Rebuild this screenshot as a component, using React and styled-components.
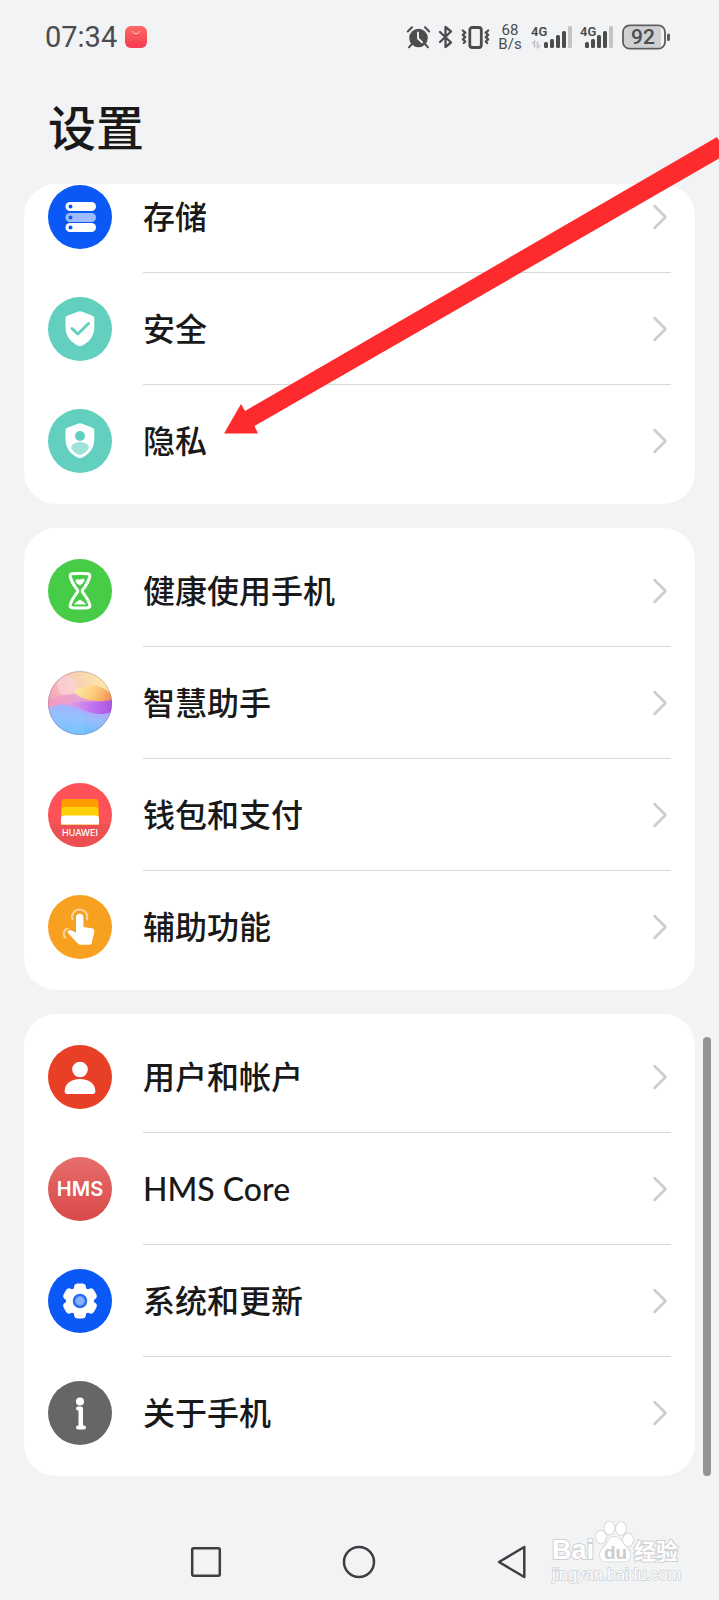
import styled, { createGlobalStyle } from 'styled-components';

const GlobalStyle = createGlobalStyle`
  * {
    box-sizing: border-box;
    margin: 0;
    padding: 0;
  }

  body {
    background: #f1f3f5;
    color: #191919;
    font-family: Lato, 'Noto Sans CJK SC', sans-serif;
  }
`;

const Screen = styled.div`
  position: relative;
  display: flex;
  flex-direction: column;
  min-height: 100vh;
  overflow: hidden;
`;

/* Status bar */

const StatusBar = styled.div`
  display: flex;
  align-items: center;
  justify-content: space-between;
  height: 74px;
  padding: 0 49px 0 45px;
  color: #4b4c4e;
  font-family: Roboto, sans-serif;
`;

const StatusGroup = styled.div`
  display: flex;
  align-items: center;
  gap: 8px;
`;

const Clock = styled.time`
  font-size: 29px;
  line-height: 32px;
`;

const NetSpeed = styled.div`
  display: flex;
  flex-direction: column;
  align-items: center;
  width: 24px;
  font-size: 15px;
  line-height: 14px;
`;

/* Settings list */

const Header = styled.header`
  padding: 22px 48px 24px;
`;

const Title = styled.h1`
  font-size: 48px;
  font-weight: 500;
  line-height: 64px;
`;

const Main = styled.main`
  position: relative;
  display: flex;
  flex-direction: column;
  gap: 24px;
  padding: 0 24px;
`;

const Card = styled.ul`
  padding: ${({ $scrolled }) => ($scrolled ? '0 24px 7px' : '7px 24px')};
  background: #fff;
  border-radius: 32px;
  list-style: none;
  overflow: hidden;
`;

const Item = styled.li`
  &:not(:last-child) a > div {
    border-bottom: 1px solid #d9d9d9;
  }
`;

const RowLink = styled.a`
  display: flex;
  align-items: center;
  gap: 31px;
  height: 112px;
  color: inherit;
  text-decoration: none;

  ${Card} > ${Item}:first-child > & {
    margin-top: ${({ $scrolled }) => ($scrolled ? '-23px' : '0')};
  }
`;

const RowBody = styled.div`
  flex: 1;
  display: flex;
  align-items: center;
  justify-content: space-between;
  height: 100%;
  padding-right: 3px;
`;

const Label = styled.span`
  font-size: 32px;
  font-weight: 500;
  line-height: 48px;
`;

const ScrollThumb = styled.div`
  position: absolute;
  right: 8px;
  bottom: 0;
  width: 8px;
  height: 34%;
  background: #929395;
  border-radius: 4px;
`;

/* Bottom navigation */

const NavBar = styled.nav`
  display: grid;
  grid-template-columns: repeat(3, 1fr);
  height: 76px;
  margin-top: auto;
  padding: 0 18%;
`;

const NavButton = styled.button`
  display: flex;
  align-items: center;
  justify-content: center;
  background: none;
  border: none;
`;

/* Overlays */

const Arrow = styled.svg`
  position: absolute;
  top: 134px;
  left: 224px;
  pointer-events: none;
`;

const Watermark = styled.div`
  position: absolute;
  right: 36px;
  bottom: 12px;
`;

const DARK = '#4b4c4e';

function AppBadge() {
  return (
    <svg width="22" height="22" viewBox="0 0 22 22">
      <defs>
        <linearGradient id="badge" x1="0" y1="0" x2="0" y2="1">
          <stop offset="0" stopColor="#fb6a62" />
          <stop offset="1" stopColor="#f53b50" />
        </linearGradient>
      </defs>
      <rect width="22" height="22" rx="6" fill="url(#badge)" />
      <path
        d="M7.500 5.500c1 3 6 3 7 0"
        fill="none"
        stroke="#ffd0cc"
        strokeWidth="1"
        strokeLinecap="round"
      />
    </svg>
  );
}

function AlarmIcon() {
  return (
    <svg width="24" height="24" viewBox="0 0 24 24">
      <circle cx="12.500" cy="13" r="9.300" fill={DARK} />
      <path
        d="M1.800 6.500 6 2.200M23.200 6.500 19 2.200M5.500 19.500 3 22.300M19.500 19.500 22 22.300"
        stroke={DARK}
        strokeWidth="2"
        strokeLinecap="round"
      />
      <path
        d="M12 7.500v6l4 3.800"
        fill="none"
        stroke="#f1f3f5"
        strokeWidth="1.900"
        strokeLinecap="round"
        strokeLinejoin="round"
      />
    </svg>
  );
}

function BluetoothIcon() {
  return (
    <svg width="15" height="24" viewBox="0 0 15 24">
      <path
        d="M2 7l11 10.500L7.500 22V2L13 6.500 2 17"
        fill="none"
        stroke={DARK}
        strokeWidth="2.300"
        strokeLinecap="round"
        strokeLinejoin="round"
      />
    </svg>
  );
}

function VibrateIcon() {
  return (
    <svg width="29" height="24" viewBox="0 0 29 24">
      <g
        fill="none"
        stroke={DARK}
        strokeLinecap="round"
        strokeLinejoin="round"
      >
        <rect x="8.800" y="2.500" width="11.500" height="20" rx="2.500" strokeWidth="2.800" />
        <path
          d="M1.800 5.500l2.500 2.200-2.500 2.200 2.500 2.200-2.500 2.200 2.500 2.200-1.500 1.500M27.200 5.500l-2.500 2.200 2.500 2.200-2.500 2.200 2.500 2.200-2.500 2.200 1.500 1.500"
          strokeWidth="2.200"
        />
      </g>
    </svg>
  );
}

function SignalIcon({ width, start, showData }) {
  const tops = [18, 15, 11, 7, 2];

  return (
    <svg width={width} height="26" viewBox={`0 0 ${width} 26`}>
      <text x={showData ? 1 : 0} y="12" fill={DARK} fontSize="13" fontWeight="600">
        4G
      </text>
      {tops.map((top, i) => (
        <rect
          key={top}
          x={start + i * 6}
          y={top}
          width="4"
          height={24 - top}
          rx="1.500"
          fill={i === 4 ? '#c3c4c6' : DARK}
        />
      ))}
      {showData && (
        <path
          d="M2 19.500 4.500 17.500V23.500M7.500 17.500V23.500L10 21.500"
          fill="none"
          stroke="#c3c4c6"
          strokeWidth="1.600"
        />
      )}
    </svg>
  );
}

function BatteryIcon() {
  return (
    <svg width="48" height="26" viewBox="0 0 48 26">
      <rect
        x="1"
        y="1.500"
        width="42"
        height="23"
        rx="6.500"
        fill="#f1f3f5"
        stroke="#5c5d5f"
        strokeWidth="1.800"
      />
      <path
        d="M8 2.500h31v21H8a6 6 0 0 1-6-6v-9a6 6 0 0 1 6-6z"
        fill="#cfd0d2"
      />
      <rect x="45" y="9.500" width="3" height="7.500" rx="1.500" fill="#5c5d5f" />
      <text
        x="21"
        y="20"
        fill={DARK}
        fontSize="21"
        fontWeight="500"
        textAnchor="middle"
      >
        92
      </text>
    </svg>
  );
}

function Disc({ color, children }) {
  return (
    <svg width="64" height="64" viewBox="0 0 64 64">
      <circle cx="32" cy="32" r="32" fill={color} />
      {children}
    </svg>
  );
}

const SHIELD =
  'M30.500 14.500Q32 13.800 33.500 14.500L44.500 18.800Q46.300 19.500 46.300 21.500V30C46.300 39.500 41 45.500 33.500 48.800Q32 49.500 30.500 48.800C23 45.500 17.500 39.500 17.500 30V21.500Q17.500 19.500 19.300 18.800Z';

function StorageIcon() {
  return (
    <Disc color="#0a59f7">
      {[17, 28, 38].map((y) => (
        <g key={y}>
          <rect
            x="17.500"
            y={y}
            width="30.500"
            height="9"
            rx="4.500"
            fill="#fff"
            fillOpacity={y === 28 ? 0.6 : 1}
          />
          <circle cx="22.500" cy={y + 4.5} r="2" fill="#0a59f7" />
        </g>
      ))}
    </Disc>
  );
}

function SecurityIcon() {
  return (
    <Disc color="#63cfbe">
      <path d={SHIELD} fill="#fff" />
      <path
        d="M24 31.500l5.800 5.500L40.500 26.500"
        fill="none"
        stroke="#63cfbe"
        strokeWidth="3"
        strokeLinecap="round"
        strokeLinejoin="round"
      />
    </Disc>
  );
}

function PrivacyIcon() {
  return (
    <Disc color="#63cfbe">
      <path d={SHIELD} fill="#fff" />
      <circle cx="32" cy="27" r="5" fill="#63cfbe" />
      <path
        d="M32 33c4.800 0 8.800 2.500 8.800 5.500 0 2.500-5.800 7.500-8.800 7.500s-8.800-5-8.800-7.500c0-3 4-5.500 8.800-5.500z"
        fill="#a1e2d8"
      />
    </Disc>
  );
}

function HourglassIcon() {
  return (
    <Disc color="#47cc47">
      <path
        d="M24 14.800Q32 14 40 14.800C42 15 42.200 16.500 41.500 18.500C40 24 37.500 27 34.500 31Q34 32 34.500 33C37.500 37 40 40 41.500 45C42.200 47.500 42 48.500 40 48.700Q32 49.500 24 48.700C22 48.500 21.800 47.500 22.500 45C24 40 26.500 37 29.500 33Q30 32 29.500 31C26.500 27 24 24 22.500 18.500C21.800 16.500 22 15 24 14.800Z"
        fill="none"
        stroke="#fff"
        strokeWidth="3"
      />
      <path
        d="M27.500 22c0-2 2.500-2.200 4.500-1.200 1.500-1.500 4-1.500 4.500.2 0 2-3 4.500-4.500 5.500-1.500-1-4.500-2.500-4.500-4.500z"
        fill="#fff"
      />
      <path d="M26 45.500c1-2.500 4-3 6-5 2 2 5 2.500 6 5z" fill="#fff" />
    </Disc>
  );
}

function AssistantIcon() {
  return (
    <svg width="64" height="64" viewBox="0 0 64 64">
      <defs>
        <clipPath id="orb">
          <circle cx="32" cy="32" r="32" />
        </clipPath>
        <linearGradient id="orbTop" x1="0" y1="0.500" x2="1" y2="0">
          <stop offset="0" stopColor="#f2a3bd" />
          <stop offset="0.500" stopColor="#fad0b4" />
          <stop offset="1" stopColor="#fff3a0" />
        </linearGradient>
        <linearGradient id="orbGold" x1="0" y1="0" x2="1" y2="0.300">
          <stop offset="0" stopColor="#ffeeb4" />
          <stop offset="0.600" stopColor="#fdcb78" />
          <stop offset="1" stopColor="#f4995c" />
        </linearGradient>
        <linearGradient id="orbPink" x1="0" y1="0" x2="1" y2="0.200">
          <stop offset="0" stopColor="#f39ab6" />
          <stop offset="0.500" stopColor="#e39bdc" />
          <stop offset="1" stopColor="#d070c0" />
        </linearGradient>
        <linearGradient id="orbViolet" x1="0" y1="0" x2="1" y2="0">
          <stop offset="0" stopColor="#e2a0e4" />
          <stop offset="0.600" stopColor="#b96cf4" />
          <stop offset="1" stopColor="#a551e6" />
        </linearGradient>
        <linearGradient id="orbBlue" x1="0.700" y1="0" x2="0.400" y2="1">
          <stop offset="0" stopColor="#c295fa" />
          <stop offset="0.450" stopColor="#9bbcfc" />
          <stop offset="1" stopColor="#5ec0fb" />
        </linearGradient>
      </defs>
      <g clipPath="url(#orb)">
        <rect width="64" height="64" fill="url(#orbTop)" />
        <circle cx="19" cy="15" r="10" fill="#fbd9e4" fillOpacity="0.500" />
        <path d="M26 20C36 12 54 12 64 24V34C48 32 34 30 26 20Z" fill="url(#orbGold)" />
        <path d="M0 28C10 26 18 23 26 23C38 30 52 32 64 28V48H0Z" fill="url(#orbPink)" fillOpacity="0.800" />
        <path d="M20 31C34 29 50 33 64 29V46H40Z" fill="url(#orbViolet)" fillOpacity="0.900" />
        <path d="M0 38C12 31 24 33 36 39C46 44 56 44 64 41V64H0Z" fill="url(#orbBlue)" />
        <path d="M0 38C12 29 28 36 40 46C32 52 34 58 38 64H0Z" fill="#8fc8ff" fillOpacity="0.450" />
      </g>
      <circle cx="32" cy="32" r="31.500" fill="none" stroke="#7d6a9c" strokeOpacity="0.350" />
    </svg>
  );
}

function WalletIcon() {
  return (
    <Disc color="#fd5257">
      <path d="M1.400 41.500H62.600A32 32 0 0 1 1.400 41.500Z" fill="#ec5052" />
      <path d="M13.500 41.500V19a3 3 0 0 1 3-3h31a3 3 0 0 1 3 3v22.500z" fill="#ff9d00" />
      <path d="M13.500 41.500V27a3 3 0 0 1 3-3h31a3 3 0 0 1 3 3v14.500z" fill="#ffd100" />
      <path d="M13 41.500V35.500a3 3 0 0 1 3-3h32a3 3 0 0 1 3 3v6z" fill="#fff" />
      <text
        x="32"
        y="53"
        fill="#fff"
        fontFamily="Inter, sans-serif"
        fontSize="9"
        fontWeight="500"
        textAnchor="middle"
      >
        HUAWEI
      </text>
    </Disc>
  );
}

function TouchIcon() {
  return (
    <Disc color="#f8a01f">
      <path
        d="M24.500 24.500a7.600 7.600 0 1 1 14.400 0M19.500 33.500C15 35.500 14.500 40 17.500 42.800"
        fill="none"
        stroke="#fcd69c"
        strokeWidth="2"
        strokeLinecap="round"
      />
      <path
        d="M28 22.500a3.700 3.700 0 0 1 7.400 0V32l8.600 1.200q2.500.5 2.300 3C46.200 40 44 44 44 47q0 2.700-2.500 2.700H32.500q-2 0-3.300-1.700L20.500 38.500C18.500 36 21 34.500 23.500 35.500L28 37.500Z"
        fill="#fff"
      />
    </Disc>
  );
}

function UserIcon() {
  return (
    <Disc color="#e84026">
      <circle cx="32" cy="24.500" r="7.800" fill="#fff" />
      <path
        d="M32 34c9.500 0 15.300 5 15.300 12.300q0 2.700-2.500 2.700H19.200q-2.500 0-2.500-2.700C16.700 39 22.500 34 32 34z"
        fill="#fff"
      />
    </Disc>
  );
}

function HmsIcon() {
  return (
    <Disc color="url(#hms)">
      <defs>
        <linearGradient id="hms" x1="0" y1="0" x2="0" y2="1">
          <stop offset="0" stopColor="#e66e6b" />
          <stop offset="1" stopColor="#d94849" />
        </linearGradient>
      </defs>
      <text
        x="32"
        y="39"
        fill="#fff"
        fontFamily="Inter, sans-serif"
        fontSize="20"
        fontWeight="600"
        textAnchor="middle"
      >
        HMS
      </text>
    </Disc>
  );
}

function SystemIcon() {
  return (
    <Disc color="#0a59f7">
      <g fill="#fff">
        <circle cx="32" cy="32" r="14" />
        {[0, 60, 120].map((angle) => (
          <rect
            key={angle}
            x="26"
            y="14.500"
            width="12"
            height="35"
            rx="4"
            transform={`rotate(${angle} 32 32)`}
          />
        ))}
      </g>
      <circle cx="32" cy="32" r="6" fill="#88adfb" stroke="#2a6cf0" strokeWidth="2.500" />
    </Disc>
  );
}

function AboutIcon() {
  return (
    <Disc color="#666">
      <circle cx="32" cy="20.500" r="4" fill="#fff" />
      <path
        d="M30 27.500h3v18M30 46.500h6"
        fill="none"
        stroke="#fff"
        strokeWidth="4"
        strokeLinecap="round"
        strokeLinejoin="round"
      />
      <path d="M30.500 27h4.500v20h-4.500z" fill="#fff" />
    </Disc>
  );
}

function Chevron() {
  return (
    <svg width="16" height="26" viewBox="0 0 16 26">
      <path
        d="M2.500 2 13.500 13 2.500 24"
        fill="none"
        stroke="#ccc"
        strokeWidth="2.500"
        strokeLinecap="round"
        strokeLinejoin="round"
      />
    </svg>
  );
}

function BaiduLogo() {
  return (
    <svg width="132" height="66" viewBox="0 0 132 66">
      <g
        fill="#fff"
        stroke="#cfd1d3"
        strokeWidth="1.500"
        paintOrder="stroke"
        fontFamily="'Liberation Sans', 'Noto Sans CJK SC', sans-serif"
      >
        <text x="1" y="40" fontSize="27" fontWeight="700" strokeWidth="2">
          Bai
        </text>
        <ellipse cx="50" cy="18" rx="5" ry="6.500" />
        <ellipse cx="58.500" cy="9" rx="5" ry="6.500" />
        <ellipse cx="70" cy="9.500" rx="5" ry="6.500" />
        <ellipse cx="77" cy="21" rx="5" ry="6.500" />
        <path d="M63.500 18c6 0 8 6 11 9s5 6 4.500 10c-.5 5-4 5.500-8 5.500H57c-4.500 0-7.500-1-8-5.500-.5-4 2-7 5-10s3.500-9 9.500-9z" />
        <text x="53" y="40" fill="#c9cbcd" stroke="none" fontSize="19" fontWeight="700">
          du
        </text>
        <text x="83" y="40" fontSize="22" fontWeight="700" strokeWidth="2">
          经验
        </text>
        <text x="1" y="61" fontSize="16" strokeWidth="1.500">
          jingyan.baidu.com
        </text>
      </g>
    </svg>
  );
}

const groups = [
  [
    { label: '存储', Icon: StorageIcon },
    { label: '安全', Icon: SecurityIcon },
    { label: '隐私', Icon: PrivacyIcon },
  ],
  [
    { label: '健康使用手机', Icon: HourglassIcon },
    { label: '智慧助手', Icon: AssistantIcon },
    { label: '钱包和支付', Icon: WalletIcon },
    { label: '辅助功能', Icon: TouchIcon },
  ],
  [
    { label: '用户和帐户', Icon: UserIcon },
    { label: 'HMS Core', Icon: HmsIcon },
    { label: '系统和更新', Icon: SystemIcon },
    { label: '关于手机', Icon: AboutIcon },
  ],
];

function SettingsCard({ items, scrolled }) {
  return (
    <Card $scrolled={scrolled}>
      {items.map(({ label, Icon }) => (
        <Item key={label}>
          <RowLink href="#" $scrolled={scrolled}>
            <Icon />
            <RowBody>
              <Label>{label}</Label>
              <Chevron />
            </RowBody>
          </RowLink>
        </Item>
      ))}
    </Card>
  );
}

function App() {
  return (
    <>
      <GlobalStyle />
      <Screen>
        <StatusBar>
          <StatusGroup>
            <Clock>07:34</Clock>
            <AppBadge />
          </StatusGroup>
          <StatusGroup>
            <AlarmIcon />
            <BluetoothIcon />
            <VibrateIcon />
            <NetSpeed>
              <span>68</span>
              <span>B/s</span>
            </NetSpeed>
            <SignalIcon width={42} start={14} showData />
            <SignalIcon width={34} start={5} />
            <BatteryIcon />
          </StatusGroup>
        </StatusBar>

        <Header>
          <Title>设置</Title>
        </Header>

        <Main>
          {groups.map((items, i) => (
            <SettingsCard key={items[0].label} items={items} scrolled={i === 0} />
          ))}
          <ScrollThumb />
        </Main>

        <NavBar>
          <NavButton aria-label="Recent apps">
            <svg width="34" height="34" viewBox="0 0 34 34">
              <rect
                x="3.200"
                y="3.200"
                width="27.600"
                height="27.600"
                rx="1.500"
                fill="none"
                stroke="#3d3e40"
                strokeWidth="2.500"
              />
            </svg>
          </NavButton>
          <NavButton aria-label="Home">
            <svg width="34" height="34" viewBox="0 0 34 34">
              <circle cx="17" cy="17" r="15" fill="none" stroke="#3d3e40" strokeWidth="2.500" />
            </svg>
          </NavButton>
          <NavButton aria-label="Back">
            <svg width="34" height="34" viewBox="0 0 34 34">
              <path
                d="M28.300 2v30L3 17z"
                fill="none"
                stroke="#3d3e40"
                strokeWidth="2.500"
                strokeLinejoin="round"
              />
            </svg>
          </NavButton>
        </NavBar>

        <Arrow width="504" height="302" viewBox="0 0 504 302">
          <path
            d="M0 299.500 17 270 21 277 493 3 503 20 30.500 292 34 299.500Z"
            fill="#fd2b2d"
          />
        </Arrow>

        <Watermark>
          <BaiduLogo />
        </Watermark>
      </Screen>
    </>
  );
}

export default App;
